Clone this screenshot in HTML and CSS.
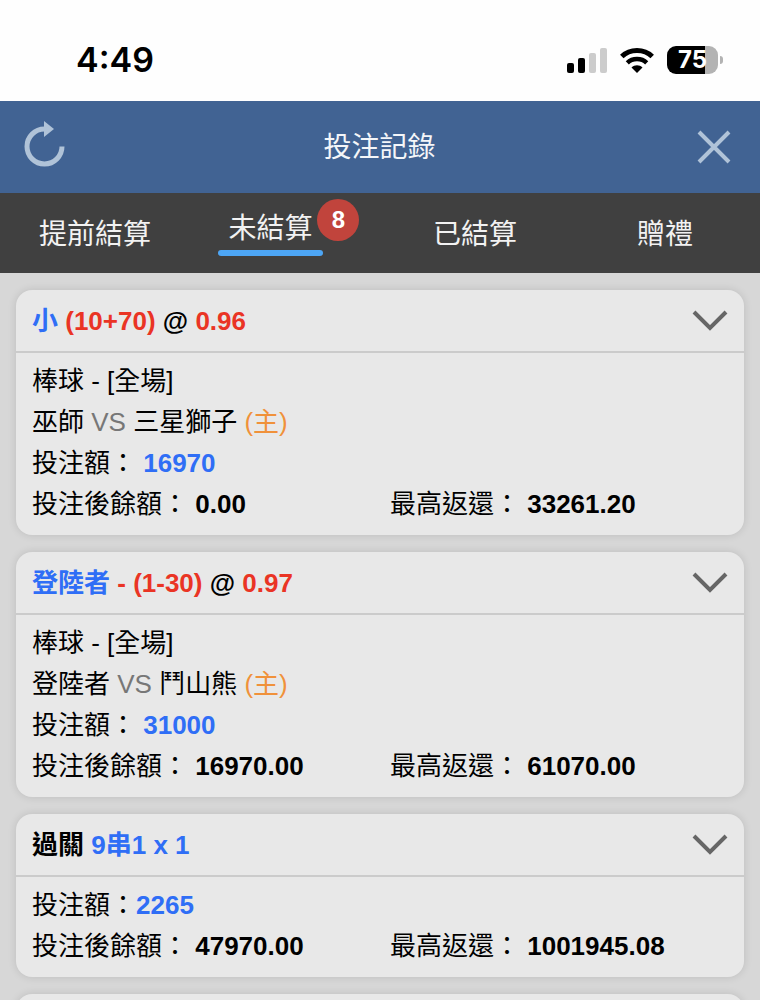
FILE: index.html
```html
<!DOCTYPE html>
<html lang="zh-Hant">
<head>
  <meta charset="UTF-8">
  <meta name="viewport" content="width=device-width, initial-scale=1">
  <title>投注記錄</title>
  <link rel="stylesheet" href="styles.css">
</head>
<body>

  <div class="status-bar">
    <span class="time">4:49</span>
    <div class="status-icons">
      <svg class="signal" width="40" height="26" viewBox="0 0 40 26">
        <rect x="0" y="16" width="7" height="10" rx="2" fill="#000"/>
        <rect x="11" y="11" width="7" height="15" rx="2" fill="#000"/>
        <rect x="22" y="6" width="7" height="20" rx="2" fill="#ccc"/>
        <rect x="33" y="1" width="7" height="25" rx="2" fill="#ccc"/>
      </svg>
      <svg class="wifi" width="34" height="26" viewBox="0 0 34 26">
        <path d="M1.800 9.500C10 1.500 24 1.500 32.200 9.500" fill="none" stroke="#000" stroke-width="5"/>
        <path d="M7.300 15.800C12.500 10.800 21.500 10.800 26.700 15.800" fill="none" stroke="#000" stroke-width="4.500"/>
        <path d="M17 26l-5.500-5.500c3-3 8-3 11 0z" fill="#000"/>
      </svg>
      <div class="battery"><span class="battery-level">75</span></div>
    </div>
  </div>

  <header class="header">
    <button class="icon-btn" aria-label="重新整理">
      <svg width="42" height="48" viewBox="0 0 42 48">
        <path d="M38 23.500A17.500 17.500 0 1 1 20.500 6" fill="none" stroke="#b0c3d8" stroke-width="5"/>
        <path d="M20 -2l10 8-10 8z" fill="#b0c3d8"/>
      </svg>
    </button>
    <h1>投注記錄</h1>
    <button class="icon-btn" aria-label="關閉">
      <svg width="34" height="34" viewBox="0 0 34 34">
        <path d="M2 2l30 30M32 2L2 32" stroke="#b0c3d8" stroke-width="4"/>
      </svg>
    </button>
  </header>

  <nav class="tabs">
    <button class="tab">提前結算</button>
    <button class="tab active"><span class="tab-label">未結算<span class="badge">8</span></span></button>
    <button class="tab">已結算</button>
    <button class="tab">贈禮</button>
  </nav>

  <main class="bets">
    <section class="bet">
      <div class="bet-header">
        <h2><span class="blue">小</span> <span class="red">(10+70)</span> @ <span class="red">0.96</span></h2>
        <button class="toggle" aria-label="展開">
          <svg width="36" height="22" viewBox="0 0 36 22"><path d="M2 2l16 16L34 2" fill="none" stroke="#666" stroke-width="4"/></svg>
        </button>
      </div>
      <div class="bet-body">
        <p>棒球 - [全場]</p>
        <p>巫師 <span class="vs">VS</span> 三星獅子 <span class="home">(主)</span></p>
        <p>投注額： <b class="blue">16970</b></p>
        <div class="amounts">
          <p>投注後餘額： <b>0.00</b></p>
          <p>最高返還： <b>33261.20</b></p>
        </div>
      </div>
    </section>

    <section class="bet">
      <div class="bet-header">
        <h2><span class="blue">登陸者</span> <span class="red">- (1-30)</span> @ <span class="red">0.97</span></h2>
        <button class="toggle" aria-label="展開">
          <svg width="36" height="22" viewBox="0 0 36 22"><path d="M2 2l16 16L34 2" fill="none" stroke="#666" stroke-width="4"/></svg>
        </button>
      </div>
      <div class="bet-body">
        <p>棒球 - [全場]</p>
        <p>登陸者 <span class="vs">VS</span> 鬥山熊 <span class="home">(主)</span></p>
        <p>投注額： <b class="blue">31000</b></p>
        <div class="amounts">
          <p>投注後餘額： <b>16970.00</b></p>
          <p>最高返還： <b>61070.00</b></p>
        </div>
      </div>
    </section>

    <section class="bet">
      <div class="bet-header">
        <h2>過關 <span class="blue">9串1 x 1</span></h2>
        <button class="toggle" aria-label="展開">
          <svg width="36" height="22" viewBox="0 0 36 22"><path d="M2 2l16 16L34 2" fill="none" stroke="#666" stroke-width="4"/></svg>
        </button>
      </div>
      <div class="bet-body">
        <p>投注額：<b class="blue">2265</b></p>
        <div class="amounts">
          <p>投注後餘額： <b>47970.00</b></p>
          <p>最高返還： <b>1001945.08</b></p>
        </div>
      </div>
    </section>

    <section class="bet">
      <div class="bet-header"></div>
    </section>
  </main>

</body>
</html>
```
FILE: styles.css
```css
* {
  box-sizing: border-box;
}

body {
  margin: 0;
  height: 100vh;
  display: flex;
  flex-direction: column;
  overflow: hidden;
  background: #d7d7d7;
  color: #000;
  font-family: "Liberation Sans", "Noto Sans CJK TC", sans-serif;
  font-size: 26px;
}

h1, h2, p {
  margin: 0;
}

button {
  padding: 0;
  border: none;
  background: none;
  color: inherit;
  font: inherit;
  cursor: pointer;
}

svg {
  display: block;
  overflow: visible;
}

/* status bar */
.status-bar {
  flex: none;
  display: flex;
  justify-content: space-between;
  align-items: center;
  padding: 30px 42px 12px 76px;
  height: 101px;
  background: #fefefe;
}

.time {
  font-family: Inter, sans-serif;
  font-size: 34px;
  font-weight: 600;
}

.status-icons {
  display: flex;
  align-items: center;
  gap: 13px;
}

.battery {
  position: relative;
  width: 51px;
  height: 28px;
  border-radius: 9px;
  background: linear-gradient(to right, #000 75%, #b3b3b3 75%);
  text-align: center;
}

.battery::after {
  content: "";
  position: absolute;
  left: 53px;
  top: 10px;
  width: 3px;
  height: 8px;
  border-radius: 0 4px 4px 0;
  background: #b3b3b3;
}

.battery-level {
  display: block;
  color: #fff;
  font-family: Inter, sans-serif;
  font-size: 24px;
  font-weight: 700;
  line-height: 28px;
}

/* header */
.header {
  flex: none;
  display: flex;
  justify-content: space-between;
  align-items: center;
  height: 92px;
  padding: 0 25px 0 24px;
  background: #416393;
  color: #f4f6f9;
}

.header h1 {
  padding-bottom: 4px;
  font-size: 28px;
  font-weight: 400;
}

.icon-btn {
  display: flex;
  align-items: center;
  justify-content: center;
  width: 42px;
  height: 48px;
}

/* tabs */
.tabs {
  flex: none;
  display: grid;
  grid-template-columns: repeat(4, 1fr);
  height: 80px;
  background: #404040;
  color: #f2f2f2;
  font-size: 28px;
}

.tab {
  padding-bottom: 2px;
}

.tab.active {
  padding-right: 29px;
  padding-bottom: 10px;
}

.tab-label {
  position: relative;
  display: inline-block;
  padding: 0 10px 4px;
}

.tab-label::after {
  content: "";
  position: absolute;
  left: 0;
  right: 0;
  bottom: -6px;
  height: 6px;
  border-radius: 3px;
  background: #4da6f5;
}

.badge {
  position: absolute;
  left: 99px;
  top: -7px;
  width: 42px;
  height: 42px;
  border-radius: 50%;
  background: #c1443c;
  color: #fff;
  font-size: 24px;
  font-weight: bold;
  line-height: 42px;
}

/* bet cards */
.bets {
  flex: 1;
  display: flex;
  flex-direction: column;
  gap: 17px;
  padding: 17px 16px 0;
  min-height: 0;
  overflow: hidden;
}

.bet {
  flex: none;
  border-radius: 16px;
  background: #e8e8e8;
  box-shadow: 0 0 8px rgba(0, 0, 0, 0.12);
}

.bet-header {
  display: flex;
  justify-content: space-between;
  align-items: center;
  height: 63px;
  padding: 0 16px;
  border-bottom: 2px solid #cbcbcb;
}

.bet-header h2 {
  padding-bottom: 4px;
  font-size: 26px;
  font-weight: bold;
}

.bet-body {
  padding: 8px 16px 10px;
  line-height: 41px;
}

.bet-body p {
  height: 41px;
  white-space: nowrap;
}

.amounts {
  display: grid;
  grid-template-columns: 1fr 1fr;
  gap: 20px;
}

.blue {
  color: #2f6ef6;
}

.red {
  color: #ea3424;
}

.vs {
  color: #777;
}

.home {
  color: #f0913a;
}
```
